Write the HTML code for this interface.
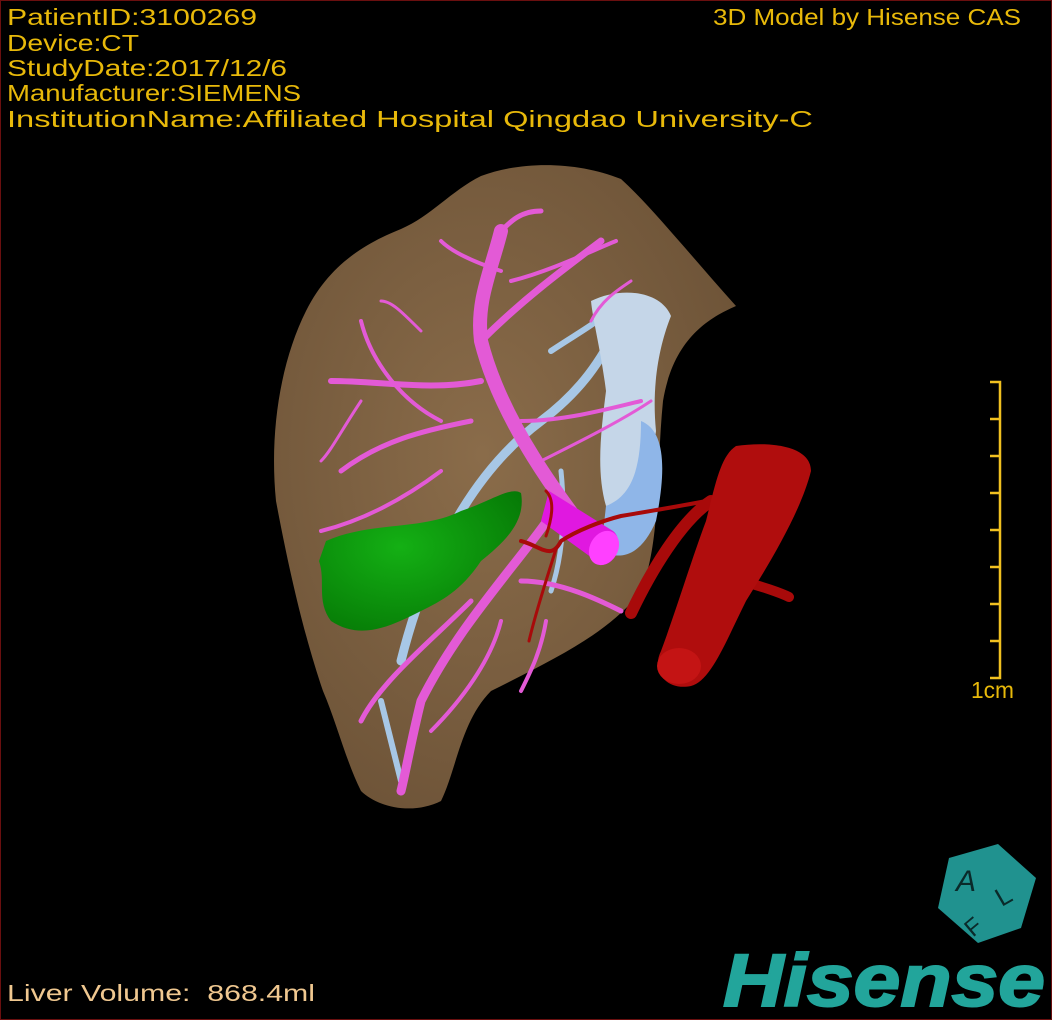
<!DOCTYPE html>
<html><head><meta charset="utf-8"><style>
html,body{margin:0;padding:0;background:#000;}
#w{position:relative;width:1052px;height:1020px;background:#000;overflow:hidden;box-sizing:border-box;border:1px solid #6a0f0f;}
svg{position:absolute;left:0;top:0;}
.y{font-family:"Liberation Sans",sans-serif;font-size:23px;fill:#e8b90a;}
</style></head><body><div id="w">
<svg width="1052" height="1020" viewBox="0 0 1052 1020">
<defs>
<radialGradient id="lv" cx="0.45" cy="0.45" r="0.6"><stop offset="0" stop-color="#8a6c4a"/><stop offset="1" stop-color="#6e5438"/></radialGradient>
<radialGradient id="gb" cx="0.4" cy="0.4" r="0.7"><stop offset="0" stop-color="#14b014"/><stop offset="1" stop-color="#067a06"/></radialGradient>
</defs>
<path d="M480 175 C520 160 575 160 620 178 C650 205 690 255 735 305 C705 318 672 340 662 400 C655 470 660 540 640 590 C610 630 560 655 490 690 C460 720 455 770 440 800 C410 815 375 805 360 790 C345 760 335 720 322 690 C305 640 290 580 275 500 C268 430 280 360 305 310 C330 260 370 240 400 228 C430 215 450 190 480 175Z" fill="url(#lv)"/>
<g fill="none" stroke="#a7c7e6" stroke-linecap="round">
<path d="M400 660 C420 580 460 480 540 420 C580 390 600 360 620 320" stroke-width="9"/>
<path d="M380 700 C390 740 395 760 400 780" stroke-width="6"/>
<path d="M550 350 C580 330 600 320 605 310" stroke-width="6"/>
<path d="M560 470 C565 520 560 560 550 590" stroke-width="5"/>
</g>
<path d="M590 300 C620 285 660 290 670 315 C660 340 650 380 655 430 C650 470 630 500 605 505 C595 470 600 430 605 390 C600 350 592 320 590 300Z" fill="#c5d6e8"/>
<path d="M640 420 C665 430 665 470 655 520 C640 555 620 560 600 550 L605 505 C630 495 640 470 640 420Z" fill="#8fb6e8"/>
<g fill="none" stroke="#e35ad6" stroke-linecap="round" stroke-linejoin="round">
<path d="M600 550 C560 500 500 420 480 340 C475 300 490 270 500 230" stroke-width="14"/>
<path d="M560 500 C520 560 460 620 420 700 C410 740 405 770 400 790" stroke-width="9"/>
<path d="M480 340 C520 300 560 270 600 240" stroke-width="7"/>
<path d="M480 380 C430 390 380 380 330 380" stroke-width="6"/>
<path d="M470 420 C420 430 380 440 340 470" stroke-width="5"/>
<path d="M440 420 C400 400 370 360 360 320" stroke-width="4"/>
<path d="M500 230 C510 220 520 210 540 210" stroke-width="5"/>
<path d="M510 280 C550 270 590 250 615 240" stroke-width="4"/>
<path d="M500 270 C470 260 450 250 440 240" stroke-width="4"/>
<path d="M520 420 C560 420 600 410 640 400" stroke-width="4"/>
<path d="M540 460 C580 440 620 420 650 400" stroke-width="3"/>
<path d="M520 580 C560 580 600 600 620 610" stroke-width="5"/>
<path d="M470 600 C430 640 380 680 360 720" stroke-width="5"/>
<path d="M500 620 C490 660 460 700 430 730" stroke-width="4"/>
<path d="M440 470 C400 500 360 520 320 530" stroke-width="4"/>
<path d="M360 400 C340 430 330 450 320 460" stroke-width="3"/>
<path d="M420 330 C400 310 390 300 380 300" stroke-width="3"/>
<path d="M545 620 C540 650 530 670 520 690" stroke-width="4"/>
<path d="M590 320 C600 300 615 290 630 280" stroke-width="3"/>
<path d="M380 560 C420 540 460 520 500 510" stroke-width="4"/>
</g>
<path d="M548 490 L612 530 C625 540 612 570 598 562 L540 520 Z" fill="#e018e0"/>
<ellipse cx="603" cy="547" rx="14" ry="18" fill="#ff40ff" transform="rotate(30 603 547)"/>
<path d="M325 540 C370 520 420 530 460 510 C490 500 510 485 520 492 C525 520 505 540 480 560 C460 590 440 600 420 610 C390 625 360 640 330 620 C315 600 325 580 318 560Z" fill="url(#gb)"/>
<g fill="none" stroke="#a80a0a" stroke-linecap="round">
<path d="M520 540 C540 545 550 560 560 540 C575 530 600 520 620 515 C650 510 680 505 705 500" stroke-width="4"/>
<path d="M555 548 C545 580 535 610 528 640" stroke-width="3"/>
<path d="M545 490 C555 500 550 520 545 535" stroke-width="3"/>
<path d="M630 612 C650 570 680 520 710 500" stroke-width="12"/>
<path d="M740 580 C760 585 780 592 788 596" stroke-width="10"/>
</g>
<path d="M735 445 C770 440 810 445 810 470 C800 510 770 560 745 600 C725 640 710 680 690 685 C665 690 650 670 660 650 C675 610 690 560 705 520 C715 480 720 455 735 445Z" fill="#b00d0d"/>
<ellipse cx="678" cy="665" rx="22" ry="18" fill="#c41414"/>
<g stroke="#f0c020" stroke-width="2.5" fill="none">
<path d="M989 381 H999 V677 H989"/>
<path d="M989 418 H999 M989 455 H999 M989 492 H999 M989 529 H999 M989 566 H999 M989 603 H999 M989 640 H999"/>
</g>
<polygon points="948,857 997,843 1035,877 1020,927 977,942 937,907" fill="#20928f"/>
<text x="955" y="890" font-family="Liberation Sans,sans-serif" font-size="30" fill="#0a2a2a" font-style="italic">A</text>
<text x="995" y="905" font-family="Liberation Sans,sans-serif" font-size="26" fill="#0a2a2a" transform="rotate(-30 1000 895)">L</text>
<text x="965" y="932" font-family="Liberation Sans,sans-serif" font-size="24" fill="#0a2a2a" transform="rotate(-40 975 925)">F</text>
<text x="722" y="1005" font-family="Liberation Sans,sans-serif" font-weight="bold" font-style="italic" font-size="74" fill="#22a59b" stroke="#22a59b" stroke-width="2" textLength="322" lengthAdjust="spacingAndGlyphs">Hisense</text>
<text class="y" x="6" y="24" textLength="250" lengthAdjust="spacingAndGlyphs">PatientID:3100269</text>
<text class="y" x="6" y="50" textLength="132" lengthAdjust="spacingAndGlyphs">Device:CT</text>
<text class="y" x="6" y="75" textLength="280" lengthAdjust="spacingAndGlyphs">StudyDate:2017/12/6</text>
<text class="y" x="6" y="100" textLength="294" lengthAdjust="spacingAndGlyphs">Manufacturer:SIEMENS</text>
<text class="y" x="6" y="126" textLength="806" lengthAdjust="spacingAndGlyphs">InstitutionName:Affiliated Hospital Qingdao University-C</text>
<text class="y" x="712" y="24" textLength="308" lengthAdjust="spacingAndGlyphs">3D Model by Hisense CAS</text>
<text class="y" x="970" y="697" textLength="43" lengthAdjust="spacingAndGlyphs">1cm</text>
<text class="y" x="6" y="1000" style="fill:#f0c890" textLength="308" lengthAdjust="spacingAndGlyphs" xml:space="preserve">Liver Volume:  868.4ml</text>
</svg>
</div></body></html>
